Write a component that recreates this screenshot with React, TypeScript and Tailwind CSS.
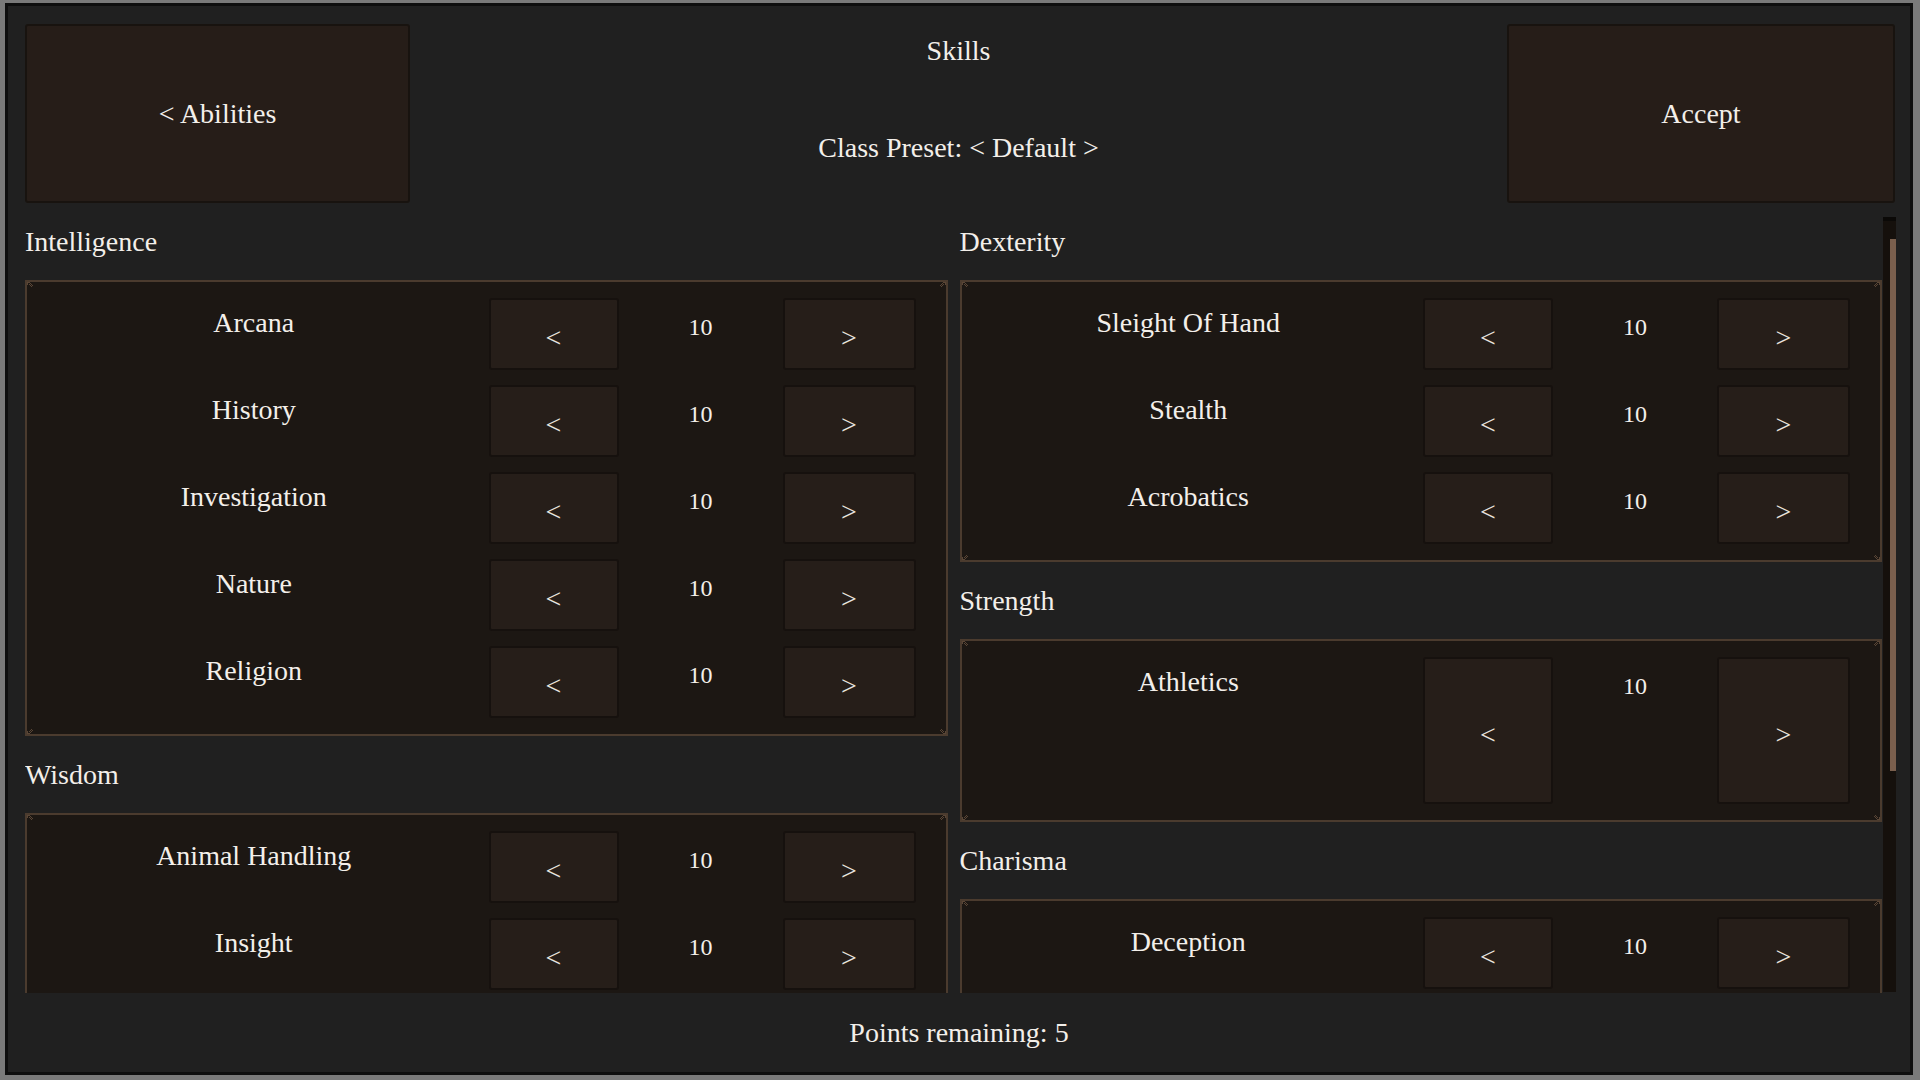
import React from 'react';

type Skill = { name: string; value: number };
type Section = { title: string; skills: Skill[]; tall?: boolean };

const leftSections: Section[] = [
  {
    title: 'Intelligence',
    skills: [
      { name: 'Arcana', value: 10 },
      { name: 'History', value: 10 },
      { name: 'Investigation', value: 10 },
      { name: 'Nature', value: 10 },
      { name: 'Religion', value: 10 },
    ],
  },
  {
    title: 'Wisdom',
    skills: [
      { name: 'Animal Handling', value: 10 },
      { name: 'Insight', value: 10 },
    ],
  },
];

const rightSections: Section[] = [
  {
    title: 'Dexterity',
    skills: [
      { name: 'Sleight Of Hand', value: 10 },
      { name: 'Stealth', value: 10 },
      { name: 'Acrobatics', value: 10 },
    ],
  },
  {
    title: 'Strength',
    tall: true,
    skills: [{ name: 'Athletics', value: 10 }],
  },
  {
    title: 'Charisma',
    skills: [{ name: 'Deception', value: 10 }],
  },
];

// little pixel notch drawn in each corner of a panel
function Corner({ className }: { className: string }) {
  return (
    <svg className={`absolute h-[10px] w-[10px] ${className}`} viewBox="0 0 10 10" shapeRendering="crispEdges">
      <path d="M0 0h3v1H1v2H0z M3 1h1v1H3z M2 2h1v1H2z M4 2h1v1H4z M3 3h1v1H3z M5 3h1v1H5z M4 4h1v1H4z" fill="#5a4636" />
    </svg>
  );
}

function StepButton({ label }: { label: string }) {
  return (
    <div className="flex h-full items-center justify-center rounded-[3px] border-2 border-[#16110e] bg-[#261e19] pt-2 text-[28px] leading-none text-[#e9e4df]">
      {label}
    </div>
  );
}

function SkillRow({ skill, tall }: { skill: Skill; tall?: boolean }) {
  return (
    <div className={`grid grid-cols-[1fr_130px_164px_133px] ${tall ? 'h-[147px]' : 'h-[72px]'}`}>
      <div className="pr-[8px] text-center text-[28px] leading-[50px]">{skill.name}</div>
      <StepButton label="<" />
      <div className="pt-[15px] text-center text-[24px] leading-[28px]">{skill.value}</div>
      <StepButton label=">" />
    </div>
  );
}

function SkillSection({ section }: { section: Section }) {
  return (
    <div>
      <div className="flex h-[77px] items-center text-[28px]">{section.title}</div>
      <div className="relative flex flex-col gap-[15px] border-2 border-[#4b3b2e] bg-[#1c1713] py-4 pr-[30px]">
        <Corner className="left-0 top-0" />
        <Corner className="right-0 top-0 -scale-x-100" />
        <Corner className="bottom-0 left-0 -scale-y-100" />
        <Corner className="bottom-0 right-0 -scale-100" />
        {section.skills.map((skill) => (
          <SkillRow key={skill.name} skill={skill} tall={section.tall} />
        ))}
      </div>
    </div>
  );
}

export default function App() {
  return (
    <main
      className="h-[1080px] w-[1920px] overflow-hidden bg-[#7a7a7a] pb-[5px] pl-[5px] pr-[7px] pt-[3px] text-[#f3efea]"
      style={{ fontFamily: '"Liberation Serif", "DejaVu Serif", serif' }}
    >
      <div className="flex h-full flex-col border-[3px] border-[#0e0e0e] bg-[#202020]">
        {/* header */}
        <div className="flex items-start pl-[17px] pr-[15px] pt-[18px]">
          <div className="flex h-[179px] w-[385px] items-center justify-center rounded-[3px] border-2 border-[#18130f] bg-[#261d18] text-[28px]">
            &lt; Abilities
          </div>
          <div className="flex h-[179px] flex-1 flex-col items-center">
            <div className="mt-[11px] text-[28px] leading-[32px]">Skills</div>
            <div className="mt-[65px] text-[28px] leading-[32px]">Class Preset: &lt; Default &gt;</div>
          </div>
          <div className="flex h-[179px] w-[388px] items-center justify-center rounded-[3px] border-2 border-[#18130f] bg-[#261d18] text-[28px]">
            Accept
          </div>
        </div>

        {/* scrollable skill lists */}
        <div className="flex h-[790px] pl-[17px]">
          <div className="grid flex-1 grid-cols-2 items-start gap-3 overflow-hidden">
            <div className="flex flex-col">
              {leftSections.map((s) => (
                <SkillSection key={s.title} section={s} />
              ))}
            </div>
            <div className="flex flex-col">
              {rightSections.map((s) => (
                <SkillSection key={s.title} section={s} />
              ))}
            </div>
          </div>
          <div className="ml-px mr-[14px] mt-[14px] flex h-[775px] w-[13px] justify-end border-t-4 border-[#0b0907] bg-[#15100c]">
            <div className="mt-[18px] h-[532px] w-[6px] bg-[#7a5f4d]" />
          </div>
        </div>

        {/* footer */}
        <div className="flex flex-1 items-center justify-center text-[28px]">Points remaining: 5</div>
      </div>
    </main>
  );
}
